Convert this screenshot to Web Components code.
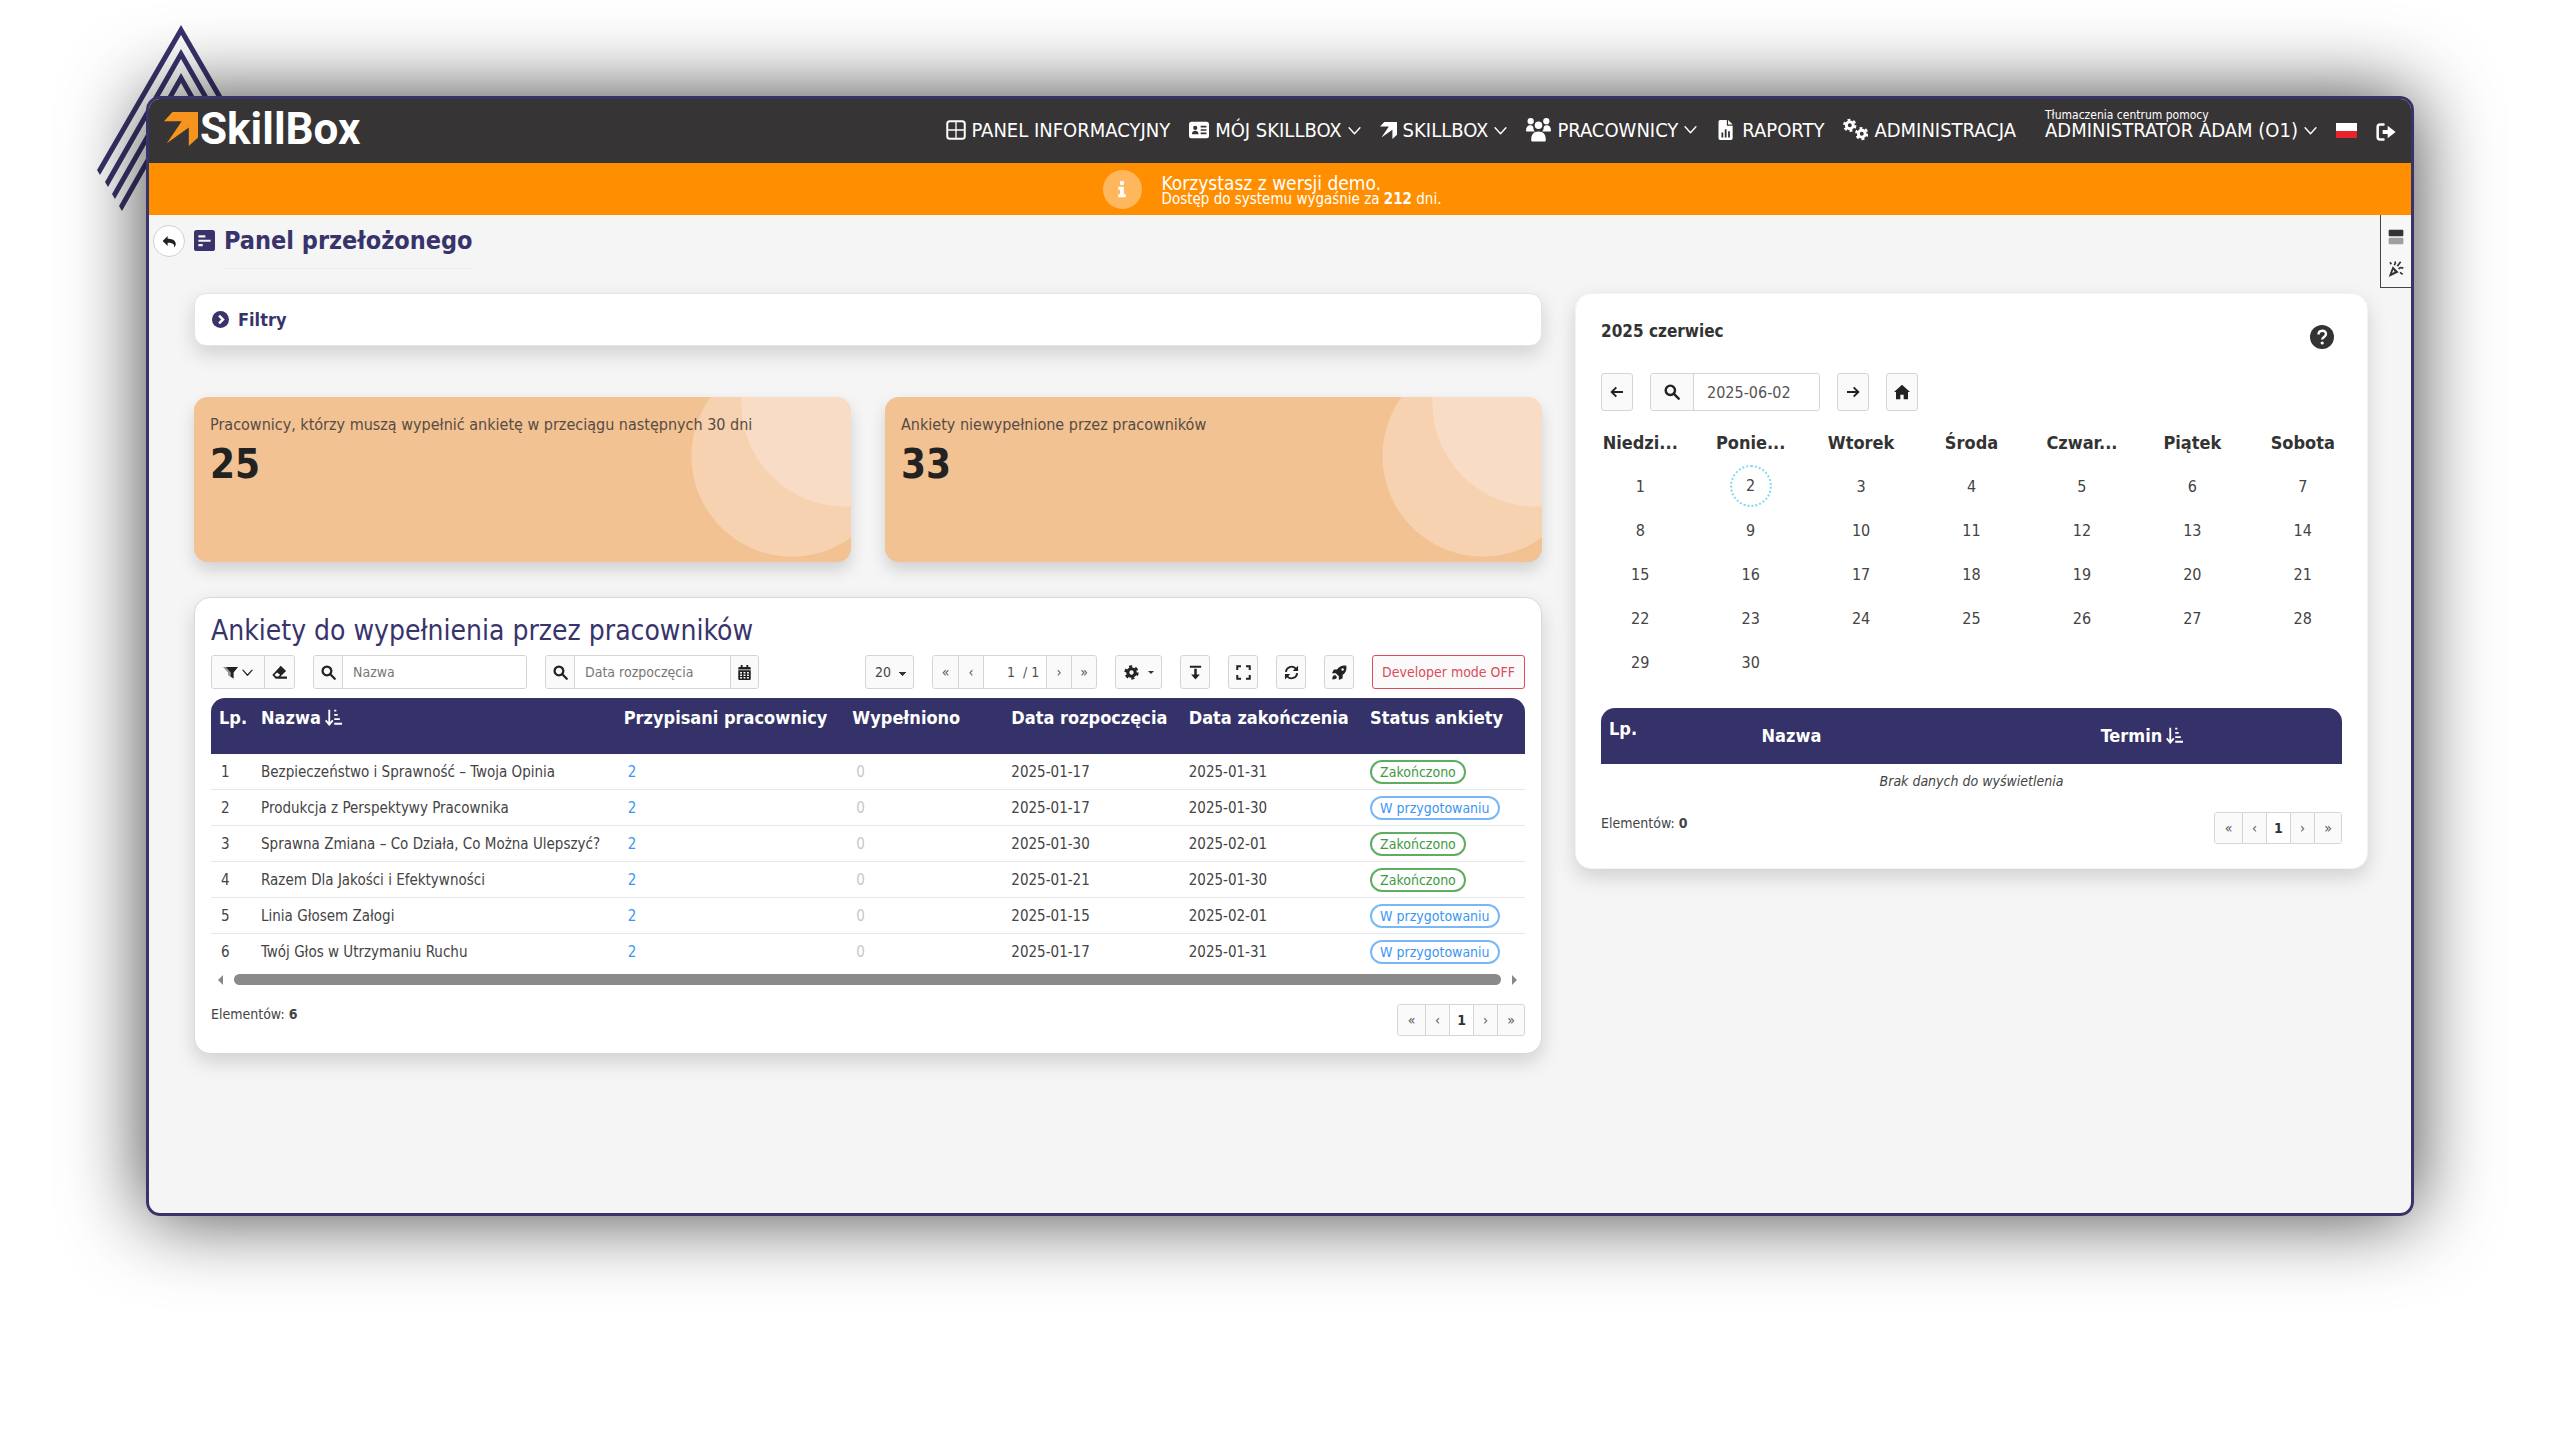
<!DOCTYPE html>
<html lang="pl">
<head>
<meta charset="utf-8">
<title>SkillBox - Panel przełożonego</title>
<style>
    :root {
        --navy: #343269;
        --orange: #ff8f00;
        --ink: #373435;
    }

    body {
        margin: 0;
        background: #fff;
        color: #444;
        font-family: "DejaVu Sans Condensed", Tahoma, "DejaVu Sans", sans-serif;
        font-size: 14px;
    }
</style>
</head>
<body>

<sb-window>
    <sb-navbar slot="top"></sb-navbar>
    <sb-alert slot="top">
        Korzystasz z wersji demo.
        <span slot="detail">Dostęp do systemu wygaśnie za <b>212</b> dni.</span>
    </sb-alert>
    <sb-page-header slot="top">Panel przełożonego</sb-page-header>
    <sb-side-tab slot="side"></sb-side-tab>

    <sb-filters slot="left">Filtry</sb-filters>
    <sb-stats slot="left">
        <sb-stat value="25">Pracownicy, którzy muszą wypełnić ankietę w przeciągu następnych 30 dni</sb-stat>
        <sb-stat value="33">Ankiety niewypełnione przez pracowników</sb-stat>
    </sb-stats>
    <sb-surveys slot="left">Ankiety do wypełnienia przez pracowników</sb-surveys>

    <sb-calendar slot="right">2025 czerwiec</sb-calendar>
</sb-window>

<script>
// icon shapes, all on a 24x24 box
const ICONS = {
    panes: '<g fill="none" stroke="currentColor" stroke-width="2.4"><rect x="1.5" y="1.5" width="21" height="21" rx="3"/><path d="M12 2v20M2 12h20" stroke-width="1.6"/></g>',
    idcard: '<path fill-rule="evenodd" d="M3 2h18a3 3 0 0 1 3 3v14a3 3 0 0 1-3 3H3a3 3 0 0 1-3-3V5a3 3 0 0 1 3-3zM7.500 7a2.500 2.500 0 1 0 0 5 2.500 2.500 0 0 0 0-5zM3.500 17h8c0-2.500-1.500-4-4-4s-4 1.500-4 4zM14 7v2h7V7zM14 11v2h7v-2zM14 15v2h7v-2z"/>',
    arrow: '<path d="M6 0H24V18L17.500 24V11L2 22 12.500 6.500H0z"/>',
    users: '<circle cx="4.500" cy="4" r="3"/><circle cx="19.500" cy="4" r="3"/><circle cx="12" cy="8" r="3.600"/><path d="M0 13c0-3 1.500-5 4-5 1.300 0 2.500.5 3 1.500 0 2 .6 3.500 1.500 4.500H1c-.6 0-1-.4-1-1zM24 13c0-3-1.500-5-4-5-1.300 0-2.500.5-3 1.500 0 2-.6 3.500-1.500 4.500H23c.6 0 1-.4 1-1zM5 22c0-5 2-8 7-8s7 3 7 8c0 1-.5 1.500-1.500 1.500h-11C5.500 23.500 5 23 5 22z"/>',
    report: '<path fill-rule="evenodd" d="M5 0h8v7h7v15a2 2 0 0 1-2 2H5a2 2 0 0 1-2-2V2a2 2 0 0 1 2-2zM14.500 0 20 5.500h-5.500zM6.500 15v6h2.200v-6zM10.500 11v10h2.200V11zM14.500 13.500V21h2.200v-7.500z"/>',
    cogs: '<g fill="none" stroke="currentColor"><circle cx="6.500" cy="8" r="3.300" stroke-width="2.800"/><circle cx="6.500" cy="8" r="5.200" stroke-width="2.400" stroke-dasharray="2.700 2.745"/><circle cx="18" cy="16" r="3.300" stroke-width="2.800"/><circle cx="18" cy="16" r="5.200" stroke-width="2.400" stroke-dasharray="2.700 2.745"/></g>',
    chevron: '<path d="M2 7l10 11L22 7" fill="none" stroke="currentColor" stroke-width="2.600" stroke-linecap="round" stroke-linejoin="round"/>',
    logout: '<path d="M9 3H5a3 3 0 0 0-3 3v12a3 3 0 0 0 3 3h4" fill="none" stroke="currentColor" stroke-width="3" stroke-linecap="round"/><path d="M8 9.500h6V4.500l9.500 7.500-9.500 7.500v-5H8z"/>',
    info: '<circle cx="12" cy="4" r="3"/><path d="M7 9h7.500v10H17v4H7v-4h2.500v-6H7z"/>',
    undo: '<path d="M9 3v4.500c9 0 13 3.500 13 8.500 0 2-1 4-3 5.500 1.500-5-1.500-7.500-10-7.500v5L1 11z"/>',
    list: '<path fill-rule="evenodd" d="M3 0h18a3 3 0 0 1 3 3v18a3 3 0 0 1-3 3H3a3 3 0 0 1-3-3V3a3 3 0 0 1 3-3zM5 6v2.500h8V6zM5 11v2.500h14V11zM5 16v2.500h5V16z"/>',
    circleRight: '<circle cx="12" cy="12" r="12"/><path d="M10 6.500l5.500 5.500-5.500 5.500" fill="none" stroke="#fff" stroke-width="3.500"/>',
    filter: '<path d="M0 3h8l4 9v7l-4-3v-4z" opacity=".45"/><path d="M5 3h19l-7 9v10l-5-3.500V12z"/>',
    eraser: '<path fill-rule="evenodd" d="M14 1l8.500 8.500-9 9H24V22H6l-5.500-6zM8 12l-4 4 3 2.500h3l3-3z"/>',
    search: '<g fill="none" stroke="currentColor" stroke-width="3.600"><circle cx="9.500" cy="9.500" r="7"/><path d="M14.500 14.500l7.500 7.500" stroke-linecap="round"/></g>',
    calendar: '<path fill-rule="evenodd" d="M6 0h3v3h6V0h3v3h2a2 2 0 0 1 2 2v2H2V5a2 2 0 0 1 2-2h2zM2 8.500h20V22a2 2 0 0 1-2 2H4a2 2 0 0 1-2-2zM5 11v2.500h3V11zM10.500 11v2.500h3V11zM16 11v2.500h3V11zM5 15v2.500h3V15zM10.500 15v2.500h3V15zM16 15v2.500h3V15zM5 19v2.500h3V19zM10.500 19v2.500h3V19zM16 19v2.500h3V19z"/>',
    gear: '<g fill="none" stroke="currentColor"><circle cx="12" cy="12" r="6" stroke-width="5"/><circle cx="12" cy="12" r="9.500" stroke-width="4" stroke-dasharray="4.970 4.970"/></g>',
    download: '<path d="M3 1h18v3.500H3zM10 6h4v9h5l-7 8-7-8h5z"/>',
    expand: '<path d="M2 8V2h6M16 2h6v6M22 16v6h-6M8 22H2v-6" fill="none" stroke="currentColor" stroke-width="3.200"/>',
    refresh: '<g fill="none" stroke="currentColor" stroke-width="3"><path d="M3 11a9 9 0 0 1 15.500-5.500L21 8M21 13a9 9 0 0 1-15.500 5.500L3 16"/></g><path d="M22.500 1v8.500H14zM1.500 23v-8.500H10z"/>',
    rocket: '<path fill-rule="evenodd" d="M23 1c.8 7-1 11-6 15v5l-6 3v-6l-5-5H0l3-6h5C12 2 16 .2 23 1zM17 5a2 2 0 1 0 0 4 2 2 0 0 0 0-4zM5 16l3 3c-1 3-3.500 4-7.500 4 0-4 1-6.500 4.500-7z"/>',
    left: '<path d="M21 12H4M11 5l-7 7 7 7" fill="none" stroke="currentColor" stroke-width="2.800"/>',
    right: '<path d="M3 12h17M13 5l7 7-7 7" fill="none" stroke="currentColor" stroke-width="2.800"/>',
    home: '<path d="M12 1l12 11h-3v11h-6.500v-7h-5v7H3V12H0z"/>',
    question: '<circle cx="12" cy="12" r="12"/><path d="M8.500 9.500c0-5 7.500-5 7.500-.5 0 3-3.800 2.800-3.800 5.500" fill="none" stroke="#fff" stroke-width="2.400"/><circle cx="12.200" cy="18" r="1.600" fill="#fff"/>',
    sort: '<path d="M6 1v20M1 16l5 6 5-6" fill="none" stroke="currentColor" stroke-width="2.600"/><path d="M13 1h3v2.600h-3zM13 7h5v2.600h-5zM13 13h8v2.600h-8zM13 19.500h11v2.800H13z"/>',
    rows: '<rect x="1" y="1" width="22" height="10" rx="1.500"/><rect x="1" y="13" width="22" height="10" rx="1.500" opacity=".45"/>',
    party: '<path fill-rule="evenodd" d="M7 8l9 9-15 7zM8 13l-2 5 4-2z"/><path d="M10 1c2 2 1 4-1 5M14 8l5-7M16 12c2-3 5-2 7-1M18 17l4 3M3 2l2 3" fill="none" stroke="currentColor" stroke-width="2.500"/>',
};

// styles that every element below starts from
const BASE = `
    :host { display: block; box-sizing: border-box; }
    * { box-sizing: border-box; }
    button, input, select {
        margin: 0;
        font: inherit;
        color: inherit;
    }
    button { cursor: pointer; padding: 0; }
    a { color: inherit; text-decoration: none; }
`;

const CONTROLS = `
    .btn, .group {
        display: flex;
        align-items: center;
        justify-content: center;
        border: 1px solid #d5d5d5;
        border-radius: 3px;
        background: #fafafa;
        color: #222;
    }
    .group { overflow: hidden; align-items: stretch; }
    .group > * {
        display: flex;
        align-items: center;
        justify-content: center;
        border: 0;
        background: #fafafa;
    }
    .group > * + * { border-left: 1px solid #d5d5d5; }
    .group input {
        background: #fff;
        color: #555;
        min-width: 0;
        outline: 0;
    }
    .group input::placeholder { color: #777; opacity: 1; }
`;

class SbElement extends HTMLElement {
    constructor() {
        super();
        this.attachShadow({ mode: 'open' });
    }

    connectedCallback() {
        this.shadowRoot.innerHTML = `<style>${BASE}${this.css()}</style>${this.html()}`;
    }

    css() { return ''; }
    html() { return '<slot></slot>'; }
}

class SbIcon extends SbElement {
    css() {
        return `
            :host { display: inline-block; flex: none; width: var(--size, 16px); height: var(--size, 16px); }
            svg { display: block; width: 100%; height: 100%; fill: currentColor; }
        `;
    }
    html() {
        return `<svg viewBox="0 0 24 24" aria-hidden="true">${ICONS[this.getAttribute('name')] || ''}</svg>`;
    }
}
customElements.define('sb-icon', SbIcon);

class SbWindow extends SbElement {
    css() {
        return `
            :host { position: relative; padding: 96px 146px 0; min-height: 100vh; }
            .peak { position: absolute; left: 96px; top: 24px; width: 172px; height: 190px; fill: #38346b; }
            .frame {
                position: relative;
                min-height: calc(100vh - 320px);
                overflow: hidden;
                border: 3px solid #38346b;
                border-radius: 14px;
                background: #f5f5f5;
            }
            .glow {
                position: relative;
                border-radius: 14px;
                box-shadow: 0 0 80px rgba(0, 0, 0, .75);
            }
            main {
                display: grid;
                grid-template-columns: minmax(0, 17fr) minmax(0, 10fr);
                gap: 33px;
                align-items: start;
                padding: 0 43px 40px 45px;
            }
            .left { display: grid; gap: 35px; }
        `;
    }
    html() {
        return `
            <svg class="peak" viewBox="0 0 172 190" aria-hidden="true">
                <path d="M85 1L1 146l3 5L85 11l81 140 3-5z"/>
                <path d="M85 25L9 158l3 5L85 35l73 128 3-5z"/>
                <path d="M85 49L16 170l3 5L85 59l66 116 3-5z"/>
                <path d="M85 73L23 182l3 5L85 83l59 104 3-5z"/>
            </svg>
            <div class="glow">
                <div class="frame">
                    <slot name="top"></slot>
                    <slot name="side"></slot>
                    <main>
                        <div class="left"><slot name="left"></slot></div>
                        <slot name="right"></slot>
                    </main>
                </div>
            </div>
        `;
    }
}
customElements.define('sb-window', SbWindow);

class SbNavbar extends SbElement {
    css() {
        return `
            :host { background: var(--ink); color: #fff; }
            header {
                display: flex;
                align-items: flex-end;
                justify-content: space-between;
                height: 64px;
                padding: 0 15px;
            }
            .logo {
                display: flex;
                align-items: center;
                gap: 2px;
                height: 60px;
                align-self: flex-start;
                font: bold 44px/44px Roboto, "Liberation Sans", sans-serif;
            }
            .logo sb-icon { --size: 34px; color: #f7941d; }
            nav {
                display: flex;
                align-items: flex-end;
                gap: 19px;
                padding-bottom: 21px;
                font-size: 20px;
                line-height: 24px;
                white-space: nowrap;
            }
            nav a { display: flex; align-items: center; gap: 6px; }
            nav sb-icon { --size: 20px; }
            nav sb-icon[name=users], nav sb-icon[name=cogs] { --size: 25px; }
            nav sb-icon[name=arrow] { --size: 17px; }
            nav sb-icon[name=chevron] { --size: 13px; }
            .user { display: flex; flex-direction: column; padding-left: 10px; }
            .user small { font-size: 12px; line-height: 12px; margin-bottom: -3px; }
            .flag {
                width: 21px;
                height: 15px;
                margin-bottom: 4px;
                background: linear-gradient(#fff 50%, #e8232c 50%);
            }
        `;
    }
    html() {
        const items = [
            ['panes', 'PANEL INFORMACYJNY'],
            ['idcard', 'MÓJ SKILLBOX', true],
            ['arrow', 'SKILLBOX', true],
            ['users', 'PRACOWNICY', true],
            ['report', 'RAPORTY'],
            ['cogs', 'ADMINISTRACJA'],
        ];
        const chevron = '<sb-icon name="chevron"></sb-icon>';
        return `
            <header>
                <a class="logo" href="#"><sb-icon name="arrow"></sb-icon>SkillBox</a>
                <nav>
                    ${items.map(([icon, text, menu]) => `
                        <a href="#"><sb-icon name="${icon}"></sb-icon><span>${text}</span>${menu ? chevron : ''}</a>
                    `).join('')}
                    <div class="user">
                        <small>Tłumaczenia centrum pomocy</small>
                        <a href="#"><span>ADMINISTRATOR ADAM (O1)</span>${chevron}</a>
                    </div>
                    <a class="flag" href="#" aria-label="Polski"></a>
                    <a href="#" aria-label="Wyloguj"><sb-icon name="logout"></sb-icon></a>
                </nav>
            </header>
        `;
    }
}
customElements.define('sb-navbar', SbNavbar);

class SbAlert extends SbElement {
    css() {
        return `
            :host {
                display: flex;
                align-items: center;
                justify-content: center;
                gap: 20px;
                height: 52px;
                padding-right: 16px;
                background: var(--orange);
                color: #fff;
            }
            .dot {
                display: grid;
                place-items: center;
                width: 39px;
                height: 39px;
                border-radius: 50%;
                background: #ffb75e;
                --size: 18px;
            }
            .text { padding-top: 2px; font-size: 19px; line-height: 18px; }
            .detail { font-size: 15px; line-height: 14px; }
        `;
    }
    html() {
        return `
            <span class="dot"><sb-icon name="info"></sb-icon></span>
            <div>
                <div class="text"><slot></slot></div>
                <div class="detail"><slot name="detail"></slot></div>
            </div>
        `;
    }
}
customElements.define('sb-alert', SbAlert);

class SbPageHeader extends SbElement {
    css() {
        return `
            :host {
                display: flex;
                align-items: flex-start;
                padding: 10px 4px 24px;
                color: #38346b;
            }
            button {
                display: grid;
                place-items: center;
                width: 32px;
                height: 32px;
                margin-right: 9px;
                border: 1px solid #d0d0d0;
                border-radius: 50%;
                background: #fff;
                color: #222;
                --size: 15px;
            }
            sb-icon[name=list] { --size: 21px; margin: 5px 9px 0 0; }
            h1 {
                margin: 0;
                padding-bottom: 11px;
                border-bottom: 1px solid #ebeeee;
                font-size: 25px;
                line-height: 32px;
            }
        `;
    }
    html() {
        return `
            <button aria-label="Wstecz"><sb-icon name="undo"></sb-icon></button>
            <sb-icon name="list"></sb-icon>
            <h1><slot></slot></h1>
        `;
    }
}
customElements.define('sb-page-header', SbPageHeader);

class SbSideTab extends SbElement {
    css() {
        return `
            :host { position: absolute; top: 116px; right: 0; }
            div {
                display: flex;
                flex-direction: column;
                align-items: center;
                justify-content: center;
                gap: 16px;
                width: 31px;
                height: 73px;
                padding-top: 3px;
                border: solid #444;
                border-width: 0 0 1px 1px;
                background: #f7f7f7;
            }
            button { padding: 0; border: 0; background: none; color: #333; line-height: 0; }
        `;
    }
    html() {
        return `
            <div>
                <button aria-label="Układ"><sb-icon name="rows"></sb-icon></button>
                <button aria-label="Nowości"><sb-icon name="party"></sb-icon></button>
            </div>
        `;
    }
}
customElements.define('sb-side-tab', SbSideTab);

const CARD = `
    :host {
        border: 1px solid #e4e4e4;
        border-radius: 16px;
        background: #fff;
        box-shadow: 0 8px 20px rgba(0, 0, 0, .15);
    }
`;

class SbFilters extends SbElement {
    css() {
        return `
            ${CARD}
            :host { margin-bottom: 16px; border-radius: 12px; }
            button {
                display: flex;
                align-items: center;
                gap: 9px;
                width: 100%;
                height: 51px;
                padding: 0 17px;
                border: 0;
                background: none;
                color: #38346b;
                font-size: 18px;
                font-weight: bold;
                --size: 17px;
            }
        `;
    }
    html() {
        return '<button aria-expanded="false"><sb-icon name="circleRight"></sb-icon><slot></slot></button>';
    }
}
customElements.define('sb-filters', SbFilters);

class SbStats extends SbElement {
    css() {
        return ':host { display: grid; grid-template-columns: 1fr 1fr; gap: 34px; }';
    }
}
customElements.define('sb-stats', SbStats);

class SbStat extends SbElement {
    css() {
        return `
            :host {
                min-height: 165px;
                padding: 16px;
                border-radius: 14px;
                background:
                    radial-gradient(circle at calc(100% - 6px) 6px, #f8dcc5 103px, transparent 104px),
                    radial-gradient(circle at calc(100% - 59px) 59px, #f7d2b0 100px, transparent 101px),
                    #f3c293;
                box-shadow: 0 8px 16px rgba(0, 0, 0, .15);
            }
            .label { font-size: 16px; line-height: 24px; color: #564c44; }
            .value { font-size: 40px; line-height: 54px; font-weight: bold; color: #222; }
        `;
    }
    html() {
        return `
            <div class="label"><slot></slot></div>
            <div class="value">${this.getAttribute('value')}</div>
        `;
    }
}
customElements.define('sb-stat', SbStat);

class SbPager extends SbElement {
    css() {
        return `
            ${CONTROLS}
            .group { height: 32px; }
            .group > * { width: 24px; color: #555; }
            .group > :first-child, .group > :last-child { width: 27px; }
            .group .current { color: #333; font-weight: bold; background: #fff; }
        `;
    }
    html() {
        return `
            <div class="group">
                <button aria-label="Pierwsza">«</button>
                <button aria-label="Poprzednia">‹</button>
                <button class="current">1</button>
                <button aria-label="Następna">›</button>
                <button aria-label="Ostatnia">»</button>
            </div>
        `;
    }
}
customElements.define('sb-pager', SbPager);

class SbSurveys extends SbElement {
    css() {
        return `
            ${CARD}
            ${CONTROLS}
            :host { padding: 12px 16px 17px; border-color: #d9d9d9; }
            h2 {
                margin: 0 0 3px;
                color: #38346b;
                font-size: 28px;
                line-height: 42px;
                font-weight: normal;
            }
            .toolbar { display: flex; gap: 18px; height: 34px; margin-bottom: 9px; --size: 15px; }
            .toolbar sb-icon[name=chevron] { --size: 11px; }
            .space { flex: 1; }
            .filter { width: 52px; gap: 4px; }
            .tool { width: 30px; }
            .group > .icon { width: 28px; }
            .group input { padding: 0 10px; justify-content: flex-start; }
            .name { width: 184px; }
            .date { width: 156px; }
            select.btn {
                width: 49px;
                padding: 0 10px 0 9px;
                appearance: none;
                background:
                    linear-gradient(135deg, #333 50%, transparent 50%) no-repeat calc(100% - 6px) 16px / 4px 4px,
                    linear-gradient(225deg, #333 50%, transparent 50%) no-repeat calc(100% - 10px) 16px / 4px 4px,
                    #fafafa;
                color: #444;
            }
            .pages > * { width: 25px; color: #555; }
            .pages > label { width: 63px; gap: 8px; background: #fff; }
            .pages label input { width: 24px; padding: 0; border: 0; text-align: right; }
            .caret { border: solid transparent; border-width: 3px 3px 0; border-top-color: #333; }
            .settings { width: 47px; gap: 9px; }
            .dev { padding: 0 9px; border-color: #dc4c5c; color: #dc4c5c; white-space: nowrap; }

            table { width: 100%; border-spacing: 0; table-layout: fixed; }
            th {
                height: 56px;
                padding: 8px 0 0 8px;
                background: var(--navy);
                color: #fff;
                font-size: 18px;
                line-height: 24px;
                text-align: left;
                vertical-align: top;
                white-space: nowrap;
            }
            th sb-icon { --size: 17px; vertical-align: -2px; margin-left: 4px; }
            th:first-child { border-radius: 14px 0 0 0; }
            th:last-child { border-radius: 0 14px 0 0; }
            td {
                height: 36px;
                padding: 0 0 0 8px;
                border-bottom: 1px solid #e8e8ea;
                font-size: 15px;
                white-space: nowrap;
            }
            tr:last-child td { border-bottom: 0; }
            td:first-child { padding-left: 10px; }
            td:nth-child(3) { padding-left: 12px; color: #3b96f2; }
            td:nth-child(4) { padding-left: 12px; color: #c8c8c8; }
            .badge {
                display: inline-block;
                padding: 0 8px;
                border: 2px solid #5fad61;
                border-radius: 12px;
                color: #3f9a43;
                font-size: 14px;
                line-height: 20px;
            }
            .badge.prep { border-color: #7ab8f5; color: #3b96f2; }

            .scroll { display: flex; align-items: center; justify-content: space-between; gap: 11px; height: 11px; margin: 4px 8px 19px 7px; }
            .scroll i { border: 5px solid transparent; }
            .scroll .prev { border-left-width: 0; border-right-color: #888; }
            .scroll .next { border-right-width: 0; border-left-color: #888; }
            .scroll span { flex: 1; height: 11px; border-radius: 6px; background: #8a8a8a; }
            footer { display: flex; justify-content: space-between; align-items: flex-start; line-height: 20px; }
        `;
    }
    html() {
        const rows = [
            ['Bezpieczeństwo i Sprawność – Twoja Opinia', '2025-01-17', '2025-01-31', true],
            ['Produkcja z Perspektywy Pracownika', '2025-01-17', '2025-01-30', false],
            ['Sprawna Zmiana – Co Działa, Co Można Ulepszyć?', '2025-01-30', '2025-02-01', true],
            ['Razem Dla Jakości i Efektywności', '2025-01-21', '2025-01-30', true],
            ['Linia Głosem Załogi', '2025-01-15', '2025-02-01', false],
            ['Twój Głos w Utrzymaniu Ruchu', '2025-01-17', '2025-01-31', false],
        ];
        return `
            <h2><slot></slot></h2>
            <div class="toolbar">
                <div class="group">
                    <button class="filter" aria-label="Filtry"><sb-icon name="filter"></sb-icon><sb-icon name="chevron"></sb-icon></button>
                    <button class="tool" aria-label="Wyczyść"><sb-icon name="eraser"></sb-icon></button>
                </div>
                <div class="group">
                    <label class="icon" for="name" aria-label="Nazwa"><sb-icon name="search"></sb-icon></label>
                    <input class="name" id="name" placeholder="Nazwa">
                </div>
                <div class="group">
                    <label class="icon" for="date" aria-label="Data rozpoczęcia"><sb-icon name="search"></sb-icon></label>
                    <input class="date" id="date" placeholder="Data rozpoczęcia">
                    <button class="icon" aria-label="Kalendarz"><sb-icon name="calendar"></sb-icon></button>
                </div>
                <div class="space"></div>
                <select class="btn" aria-label="Na stronie"><option>20</option><option>50</option></select>
                <div class="group pages">
                    <button aria-label="Pierwsza">«</button>
                    <button aria-label="Poprzednia">‹</button>
                    <label><input value="1" aria-label="Strona"> / 1</label>
                    <button aria-label="Następna">›</button>
                    <button aria-label="Ostatnia">»</button>
                </div>
                <button class="btn settings" aria-label="Ustawienia"><sb-icon name="gear"></sb-icon><i class="caret"></i></button>
                <button class="btn tool" aria-label="Pobierz"><sb-icon name="download"></sb-icon></button>
                <button class="btn tool" aria-label="Pełny ekran"><sb-icon name="expand"></sb-icon></button>
                <button class="btn tool" aria-label="Odśwież"><sb-icon name="refresh"></sb-icon></button>
                <button class="btn tool" aria-label="Akcje"><sb-icon name="rocket"></sb-icon></button>
                <button class="btn dev">Developer mode OFF</button>
            </div>
            <table>
                <colgroup>
                    <col style="width: 3.2%"><col style="width: 27.6%"><col style="width: 17.4%">
                    <col style="width: 12.1%"><col style="width: 13.5%"><col style="width: 13.8%"><col>
                </colgroup>
                <thead>
                    <tr>
                        <th>Lp.</th>
                        <th>Nazwa<sb-icon name="sort"></sb-icon></th>
                        <th>Przypisani pracownicy</th>
                        <th>Wypełniono</th>
                        <th>Data rozpoczęcia</th>
                        <th>Data zakończenia</th>
                        <th>Status ankiety</th>
                    </tr>
                </thead>
                <tbody>
                    ${rows.map(([name, from, to, done], i) => `
                        <tr>
                            <td>${i + 1}</td>
                            <td>${name}</td>
                            <td><a href="#">2</a></td>
                            <td>0</td>
                            <td>${from}</td>
                            <td>${to}</td>
                            <td>${done ? '<span class="badge">Zakończono</span>' : '<span class="badge prep">W przygotowaniu</span>'}</td>
                        </tr>
                    `).join('')}
                </tbody>
            </table>
            <div class="scroll"><i class="prev"></i><span></span><i class="next"></i></div>
            <footer>
                <div>Elementów: <b>6</b></div>
                <sb-pager></sb-pager>
            </footer>
        `;
    }
}
customElements.define('sb-surveys', SbSurveys);

class SbCalendar extends SbElement {
    css() {
        return `
            ${CARD}
            ${CONTROLS}
            :host { padding: 25px 25px 24px; border-color: #f3f3f3; }
            header { display: flex; justify-content: space-between; align-items: flex-end; height: 30px; margin-bottom: 24px; }
            h2 { margin: 0; align-self: flex-start; color: #333; font-size: 17px; line-height: 24px; }
            header button { margin-right: 8px; border: 0; background: none; color: #333; line-height: 0; --size: 24px; }
            .toolbar { display: flex; gap: 17px; height: 38px; margin-bottom: 20px; font-size: 16px; }
            .toolbar .btn { width: 32px; }
            .toolbar label { width: 42px; }
            .toolbar input { width: 126px; padding: 0 13px; }

            .month { width: calc(100% + 32px); margin: 0 -16px 24px; border-spacing: 0; table-layout: fixed; text-align: center; font-size: 16px; }
            .month th { height: 33px; padding: 0; color: #333; font-size: 18px; line-height: 24px; vertical-align: top; }
            .month td { height: 44px; padding: 0; }
            .today {
                display: inline-block;
                width: 42px;
                height: 42px;
                border: 2px dotted #7fd9ee;
                border-radius: 50%;
                line-height: 38px;
            }

            .tasks { width: 100%; margin-bottom: 14px; border-spacing: 0; table-layout: fixed; }
            .tasks th { height: 56px; padding: 0; background: var(--navy); color: #fff; font-size: 18px; line-height: 24px; }
            .tasks th:first-child { width: 40px; padding: 9px 0 0 8px; border-radius: 14px 0 0 0; vertical-align: top; text-align: left; }
            .tasks th:last-child { border-radius: 0 14px 0 0; width: 54%; }
            .tasks sb-icon { --size: 17px; vertical-align: -2px; margin-left: 4px; }
            .tasks td { height: 34px; padding: 0; text-align: center; font-style: italic; }
            footer { display: flex; justify-content: space-between; align-items: flex-start; line-height: 22px; }
        `;
    }
    html() {
        const names = ['Niedzi...', 'Ponie...', 'Wtorek', 'Środa', 'Czwar...', 'Piątek', 'Sobota'];
        const week = (w) => names.map((_, i) => {
            const day = w * 7 + i + 1;
            if (day > 30) return '<td></td>';
            return `<td>${day === 2 ? '<span class="today">2</span>' : day}</td>`;
        }).join('');
        return `
            <header>
                <h2><slot></slot></h2>
                <button aria-label="Pomoc"><sb-icon name="question"></sb-icon></button>
            </header>
            <div class="toolbar">
                <button class="btn" aria-label="Poprzedni"><sb-icon name="left"></sb-icon></button>
                <div class="group">
                    <label for="day" aria-label="Data"><sb-icon name="search"></sb-icon></label>
                    <input id="day" value="2025-06-02">
                </div>
                <button class="btn" aria-label="Następny"><sb-icon name="right"></sb-icon></button>
                <button class="btn" aria-label="Dzisiaj"><sb-icon name="home"></sb-icon></button>
            </div>
            <table class="month">
                <thead><tr>${names.map((name) => `<th>${name}</th>`).join('')}</tr></thead>
                <tbody>${[0, 1, 2, 3, 4].map((w) => `<tr>${week(w)}</tr>`).join('')}</tbody>
            </table>
            <table class="tasks">
                <thead>
                    <tr><th>Lp.</th><th>Nazwa</th><th>Termin<sb-icon name="sort"></sb-icon></th></tr>
                </thead>
                <tbody><tr><td colspan="3">Brak danych do wyświetlenia</td></tr></tbody>
            </table>
            <footer>
                <div>Elementów: <b>0</b></div>
                <sb-pager></sb-pager>
            </footer>
        `;
    }
}
customElements.define('sb-calendar', SbCalendar);
</script>
</body>
</html>
